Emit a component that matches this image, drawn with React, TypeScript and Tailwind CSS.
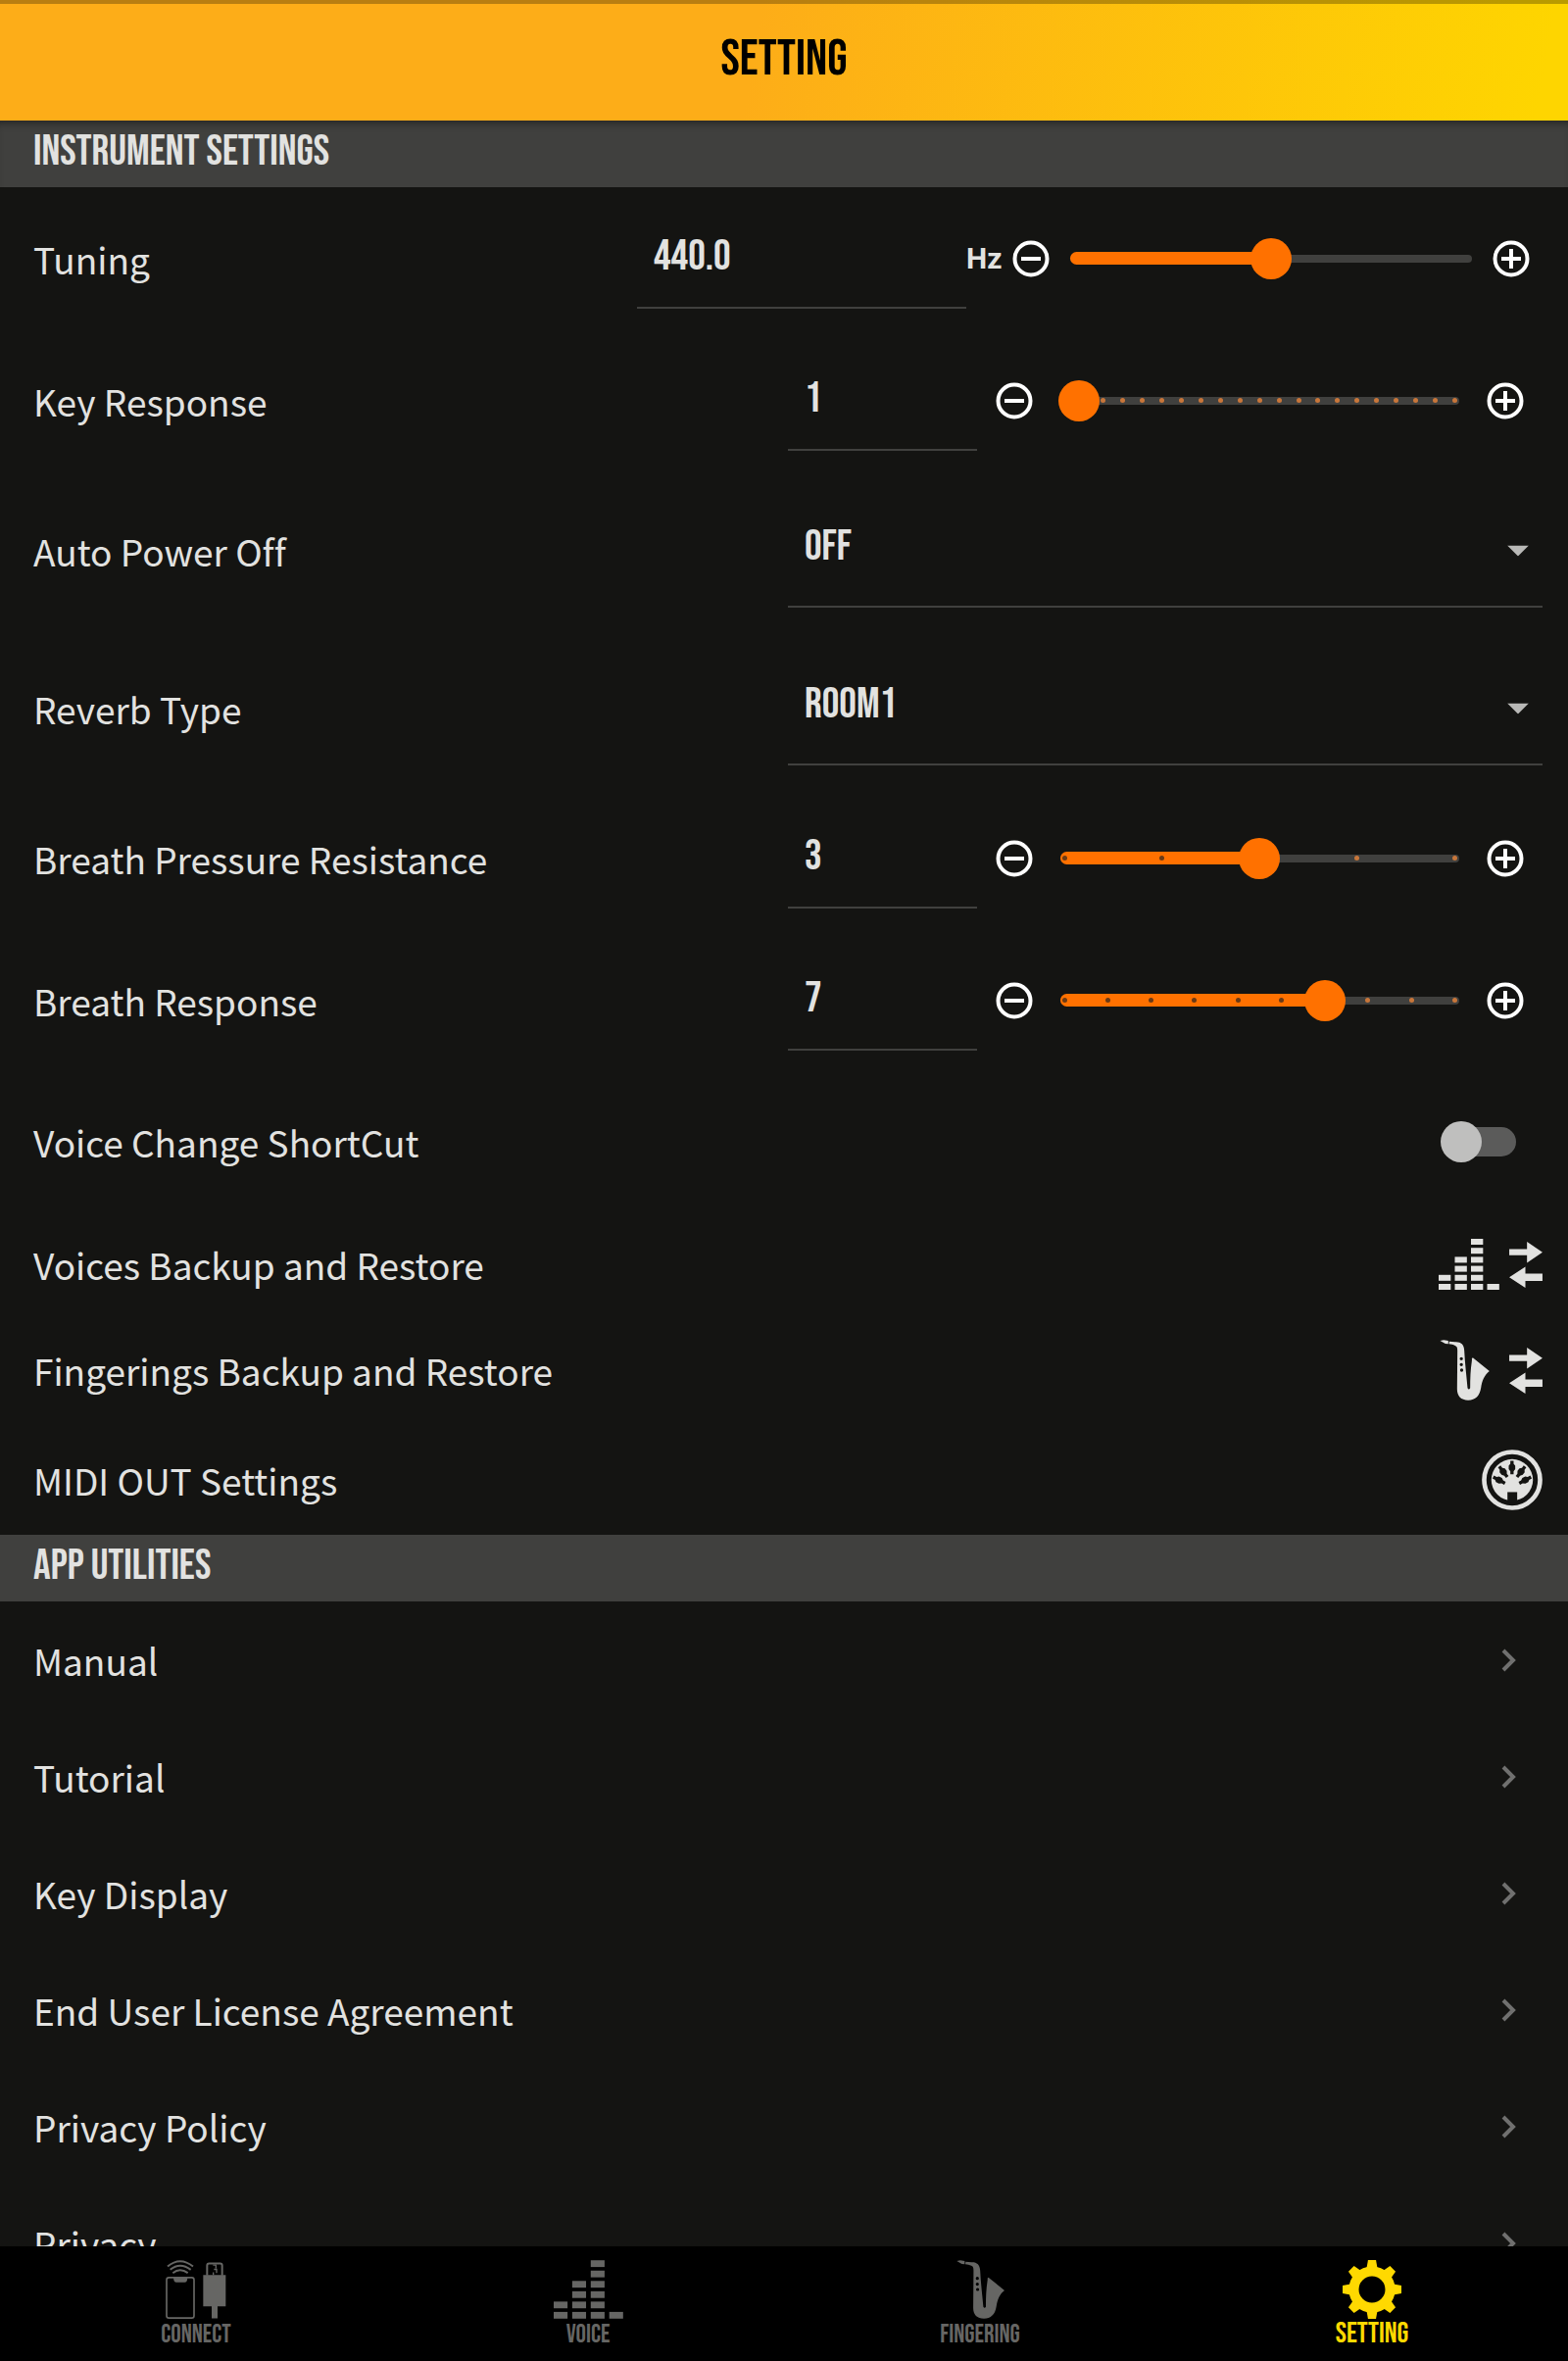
import { useState, type ReactNode } from 'react'

const display = "font-['Bebas_Neue','Noto_Sans_CJK_JP',sans-serif] font-normal"

function EqualizerIcon({ className }: { className: string }) {
  const columns = [2, 4, 6, 1]
  return (
    <svg viewBox="0 0 186 156" className={className} fill="currentColor" aria-hidden="true">
      {columns.map((count, col) =>
        Array.from({ length: count }, (_, i) => (
          <rect key={`${col}-${i}`} x={col * 49.5} y={138 - i * 27.6} width="37" height="18" />
        )),
      )}
    </svg>
  )
}

function SaxIcon({ className }: { className: string }) {
  return (
    <svg viewBox="91 379 152 186" className={className} fill="currentColor" fillRule="evenodd" aria-hidden="true">
      <path d="M92 382l11-2 14 2v10l-9-1z" />
      <path d="M120 384l18 2c17-1 27 7 28 26 2 40 7 80 10 115q4 7 8 0c0-30 1-57 5-82q1-6 0-8l3-3 51 41c-15 11-23 30-26 52-4 24-17 37-39 37s-34-12-34-34l1-118c0-9-2-13-7-15-6-3-12-4-19-5zM152 437a5 5 0 1 0 10 0a5 5 0 1 0-10 0M152 455a5 5 0 1 0 10 0a5 5 0 1 0-10 0M153 472a5 5 0 1 0 10 0a5 5 0 1 0-10 0" />
    </svg>
  )
}

function SwapIcon() {
  return (
    <svg viewBox="301 71 101 140" className="h-[47px] w-[34px]" fill="currentColor" aria-hidden="true">
      <path d="M301 93h54V71l47 32-47 32v-23h-54zM402 168h-52v-21l-49 32 49 32v-21h52z" />
    </svg>
  )
}

const midiPins = [
  { x: 269, y: 271, angle: -62 },
  { x: 282, y: 245, angle: -37 },
  { x: 309, y: 232, angle: 0 },
  { x: 337, y: 245, angle: 37 },
  { x: 350, y: 271, angle: 62 },
]

function MidiIcon() {
  return (
    <svg viewBox="216 177 187 187" className="size-[62px]" aria-hidden="true">
      <circle cx="309.500" cy="270.500" r="86" fill="none" stroke="currentColor" strokeWidth="14" />
      <circle cx="309.500" cy="270.500" r="64" fill="currentColor" />
      {midiPins.map((p) => (
        <path
          key={p.x}
          d="M-5-20H5V-11L10-5V5L5 12V21H-5V12L-10 5V-5L-5-11z"
          fill="#141412"
          transform={`translate(${p.x} ${p.y}) rotate(${p.angle})`}
        />
      ))}
      <path d="M295 308h30v32h-30z" fill="#141412" />
    </svg>
  )
}

function ConnectIcon() {
  return (
    <svg viewBox="206 110 186 179" className="h-[60px] w-[62px]" fill="none" stroke="currentColor" aria-hidden="true">
      <rect x="209" y="163" width="84" height="124" rx="7" strokeWidth="5" />
      <path d="M230 163h43c0 9-3 15-9 15h-25c-6 0-9-6-9-15z" fill="currentColor" stroke="none" />
      <path d="M212 129q38-32 78 0M220 139q30-25 63 0M228 149q22-17 46 0" strokeWidth="6" />
      <path d="M333 157v-31q0-6 6-6h34q6 0 6 6v31" strokeWidth="6" />
      <path d="M321 155h69v96h-25v37h-18v-37h-26z" fill="currentColor" stroke="none" />
      <path d="M351 125h9v10M354 138h8v11M352 147v8" strokeWidth="4" />
    </svg>
  )
}

function GearIcon() {
  return (
    <svg viewBox="-89 -89 178 178" className="size-[60px]" aria-hidden="true">
      <circle r="55" fill="none" stroke="currentColor" strokeWidth="30" />
      {[0, 45, 90, 135, 180, 225, 270, 315].map((angle) => (
        <path key={angle} d="M-12-89h24l5 28h-34z" fill="currentColor" transform={`rotate(${angle})`} />
      ))}
    </svg>
  )
}

function StepIcon({ plus }: { plus?: boolean }) {
  return (
    <svg viewBox="0 0 38 38" className="size-[38px]" fill="none" stroke="currentColor" strokeWidth="4" aria-hidden="true">
      <circle cx="19" cy="19" r="16.500" />
      <path d={plus ? 'M9 19h20M19 9v20' : 'M9 19h20'} />
    </svg>
  )
}

function Chevron() {
  return (
    <svg viewBox="0 0 16 24" className="mr-[26px] h-6 w-4" fill="none" stroke="#70706f" strokeWidth="4" aria-hidden="true">
      <path d="M2 2l10 10L2 22" />
    </svg>
  )
}

function SectionTitle({ children, shaded }: { children: ReactNode; shaded?: boolean }) {
  return (
    <h2
      className={`${display} h-[68px] bg-[#40403e] pl-[34px] text-[44px] leading-[64px] ${
        shaded ? 'shadow-[inset_0_8px_8px_-6px_#222220]' : ''
      }`}
    >
      {children}
    </h2>
  )
}

type SliderProps = {
  id: string
  label: string
  initial: number
  min: number
  max: number
  step: number
  digits?: number
  unit?: string
  ticks?: number
}

function SliderRow({ id, label, initial, min, max, step, digits = 0, unit, ticks = 0 }: SliderProps) {
  const [value, setValue] = useState(initial)
  const change = (next: number) => setValue(Math.min(max, Math.max(min, next)))
  // the thumb never runs past the rounded end of the track
  const ratio = Math.min(0.96, Math.max(0.04, (value - min) / (max - min)))
  const button = `flex shrink-0 cursor-pointer justify-center text-white ${unit ? 'w-16' : 'w-[77px]'}`

  return (
    <div className="flex h-[145px] items-center pr-[26px] pl-[34px]">
      <label htmlFor={id} className="flex-1">
        {label}
      </label>
      <div className={`flex items-center ${unit ? 'w-3/5' : 'w-1/2'}`}>
        <input
          id={id}
          type="text"
          inputMode="decimal"
          value={value.toFixed(digits)}
          onChange={(e) => change(Number(e.target.value) || min)}
          className={`${display} mb-2 h-[110px] min-w-0 border-b-2 border-[#40403e] bg-transparent pt-1.5 pl-[17px] text-[44px] outline-none ${
            unit ? 'w-4/11' : 'w-1/4'
          }`}
        />
        {unit && <span className="w-[34px] font-['Roboto',sans-serif] text-[30px] font-bold">{unit}</span>}
        <button type="button" aria-label={`Decrease ${label}`} className={button} onClick={() => change(value - step)}>
          <StepIcon />
        </button>
        <div className="relative mx-2 flex h-[42px] flex-1 items-center">
          <div className="absolute inset-x-0 h-2 rounded-full bg-[#40403e]" />
          <div
            className="absolute left-0 h-[13px] rounded-full bg-[#ff7100]"
            style={{ width: `${ratio * 100}%` }}
          />
          <div className="absolute inset-x-[2px] flex justify-between">
            {Array.from({ length: ticks }, (_, i) => (
              <span
                key={i}
                className={`size-[5px] rounded-full ${i / (ticks - 1) < ratio ? 'bg-[#6b3a15]' : 'bg-[#c8763a]'}`}
              />
            ))}
          </div>
          <input
            type="range"
            aria-label={`${label} slider`}
            min={min}
            max={max}
            step="any"
            value={min + ratio * (max - min)}
            onChange={(e) => change(Math.round(Number(e.target.value) / step) * step)}
            className="relative -mx-[17px] h-[42px] flex-1 cursor-pointer appearance-none bg-transparent [&::-webkit-slider-thumb]:size-[42px] [&::-webkit-slider-thumb]:appearance-none [&::-webkit-slider-thumb]:rounded-full [&::-webkit-slider-thumb]:bg-[#ff7100]"
          />
        </div>
        <button type="button" aria-label={`Increase ${label}`} className={button} onClick={() => change(value + step)}>
          <StepIcon plus />
        </button>
      </div>
    </div>
  )
}

function SelectRow({ id, label, options }: { id: string; label: string; options: string[] }) {
  return (
    <div className="flex h-[161px] items-center pr-[26px] pl-[34px]">
      <label htmlFor={id} className="flex-1">
        {label}
      </label>
      <div className="relative w-1/2">
        <select
          id={id}
          className={`${display} mb-3 block h-[128px] w-full appearance-none border-b-2 border-[#40403e] bg-[#141412] pt-1.5 pl-[17px] text-[44px] outline-none`}
        >
          {options.map((o) => (
            <option key={o}>{o}</option>
          ))}
        </select>
        <svg
          viewBox="0 0 22 11"
          className="pointer-events-none absolute top-1/2 right-[14px] h-[11px] w-[22px] -translate-y-1/2"
          aria-hidden="true"
        >
          <path d="M0 0h22L11 11z" fill="#b9b9b7" />
        </svg>
      </div>
    </div>
  )
}

function BackupRow({ label, className, children }: { label: string; className: string; children: ReactNode }) {
  return (
    <button
      type="button"
      className={`flex w-full cursor-pointer items-center justify-between pr-[26px] pl-[34px] text-left ${className}`}
    >
      {label}
      <span className="flex items-center">{children}</span>
    </button>
  )
}

const utilities = ['Manual', 'Tutorial', 'Key Display', 'End User License Agreement', 'Privacy Policy', 'Privacy']

const tabs = [
  { label: 'CONNECT', icon: <ConnectIcon /> },
  { label: 'VOICE', icon: <EqualizerIcon className="h-[60px] w-[71px]" /> },
  { label: 'FINGERING', icon: <SaxIcon className="h-[60px] w-[49px]" /> },
  { label: 'SETTING', icon: <GearIcon />, active: true },
]

export default function App() {
  const [shortcut, setShortcut] = useState(false)

  return (
    <div className="flex h-screen flex-col bg-[#141412] font-['Noto_Sans_CJK_JP','Noto_Sans',sans-serif] text-[37px] leading-[56px] text-[#e2e2e0] [font-variant-ligatures:none]">
      <header className="h-[123px] shrink-0 bg-[linear-gradient(100deg,#fdad18_48%,#fed500_98%)] shadow-[inset_0_4px_rgba(0,0,0,0.27)]">
        <h1 className={`${display} text-center text-[52px] leading-[121px] text-black`}>SETTING</h1>
      </header>

      <main className="min-h-0 flex-1 overflow-y-auto [scrollbar-width:none]">
        <section>
          <SectionTitle shaded>INSTRUMENT SETTINGS</SectionTitle>
          <SliderRow id="tuning" label="Tuning" initial={440} min={430} max={450} step={0.1} digits={1} unit="Hz" />
          <SliderRow id="key-response" label="Key Response" initial={1} min={1} max={21} step={1} ticks={21} />
          <SelectRow id="auto-power" label="Auto Power Off" options={['OFF', '4 MIN', '10 MIN', '30 MIN']} />
          <SelectRow id="reverb" label="Reverb Type" options={['ROOM1', 'ROOM2', 'HALL1', 'HALL2']} />
          <SliderRow id="resistance" label="Breath Pressure Resistance" initial={3} min={1} max={5} step={1} ticks={5} />
          <SliderRow id="breath" label="Breath Response" initial={7} min={1} max={10} step={1} ticks={10} />

          <label className="flex h-36 cursor-pointer items-center justify-between pr-[52px] pl-[34px]">
            Voice Change ShortCut
            <span className="relative flex h-[42px] w-[78px] items-center">
              <input
                type="checkbox"
                role="switch"
                checked={shortcut}
                onChange={(e) => setShortcut(e.target.checked)}
                className="peer ml-[6px] h-[30px] w-[71px] cursor-pointer appearance-none rounded-full bg-[#5b5b5a] checked:bg-[#8a4a18]"
              />
              <span className="pointer-events-none absolute left-0 size-[42px] rounded-full bg-[#bfbfbe] peer-checked:right-0 peer-checked:left-auto peer-checked:bg-[#ff7100]" />
            </span>
          </label>
          <BackupRow label="Voices Backup and Restore" className="h-[106px]">
            <EqualizerIcon className="mr-[10px] h-[52px] w-[62px]" />
            <SwapIcon />
          </BackupRow>
          <BackupRow label="Fingerings Backup and Restore" className="h-[110px]">
            <SaxIcon className="mr-5 h-[62px] w-[51px]" />
            <SwapIcon />
          </BackupRow>
          <BackupRow label="MIDI OUT Settings" className="h-[113px]">
            <MidiIcon />
          </BackupRow>
        </section>

        <section>
          <SectionTitle>APP UTILITIES</SectionTitle>
          {utilities.map((name) => (
            <a key={name} href="#" className="flex h-[119px] items-center justify-between pr-[26px] pl-[34px]">
              {name}
              <Chevron />
            </a>
          ))}
        </section>
      </main>

      <nav className="grid h-[117px] shrink-0 grid-cols-4 bg-black">
        {tabs.map((tab) => (
          <a
            key={tab.label}
            href="#"
            aria-current={tab.active ? 'page' : undefined}
            className={`flex flex-col items-center pt-[14px] ${tab.active ? 'text-[#ffd900]' : 'text-[#666664]'}`}
          >
            {tab.icon}
            <span className={`${display} ${tab.active ? 'text-[30px] leading-[30px]' : 'text-[26px] leading-[34px]'}`}>
              {tab.label}
            </span>
          </a>
        ))}
      </nav>
    </div>
  )
}
